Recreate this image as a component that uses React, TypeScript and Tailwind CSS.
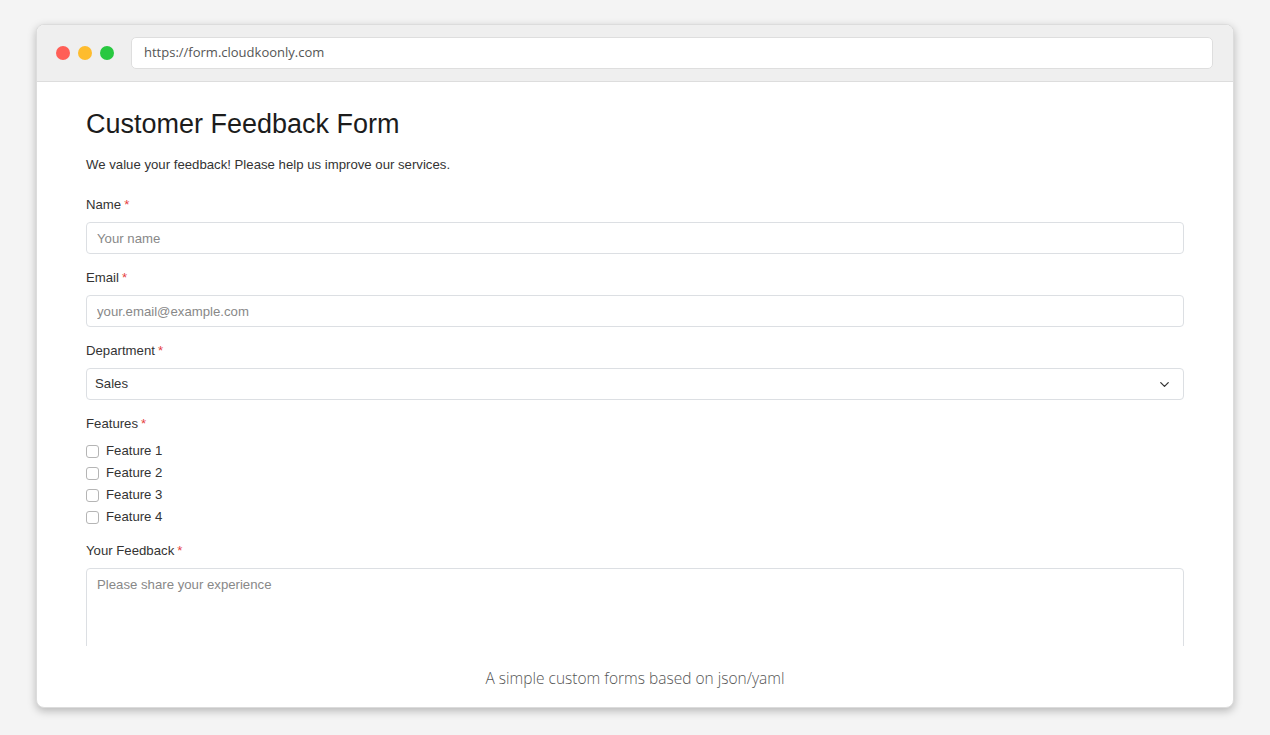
import React from 'react';
import { ChevronDown } from 'lucide-react';

const Label: React.FC<{ text: string }> = ({ text }) => (
  <div className="h-5 leading-5 text-[13.2px] text-[#333]">
    {text}
    <span className="ml-[3px] text-[#e53e3e]">*</span>
  </div>
);

const features = ['Feature 1', 'Feature 2', 'Feature 3', 'Feature 4'];

export default function App() {
  return (
    <div className="min-h-screen w-full bg-[#f4f4f4] pt-6 px-9" style={{ fontFamily: '"Liberation Sans", Arial, sans-serif' }}>
      <div className="h-[684px] w-[1198px] flex flex-col overflow-hidden rounded-lg bg-white border border-[#dcdcdc] shadow-[0_3px_8px_rgba(0,0,0,0.25)]">
        {/* title bar */}
        <div className="h-[57px] shrink-0 flex items-center bg-[#efefef] border-b border-[#dddddd] pl-[19px] pr-5">
          <div className="flex items-center gap-2">
            <span className="block w-[14px] h-[14px] rounded-full bg-[#ff5f57]" />
            <span className="block w-[14px] h-[14px] rounded-full bg-[#febc2e]" />
            <span className="block w-[14px] h-[14px] rounded-full bg-[#28c840]" />
          </div>
          <div
            className="ml-[17px] flex-1 h-[32px] flex items-center rounded-[5px] bg-white border border-[#dedede] px-3 text-[13px] text-[#555]"
            style={{ fontFamily: '"Open Sans", sans-serif' }}
          >
            https://form.cloudkoonly.com
          </div>
        </div>

        {/* scrolling form area */}
        <div className="h-[564px] shrink-0 overflow-hidden px-[49px] pt-[27px]">
          <h1 className="text-[27px] leading-[30px] text-[#1c1c1c]">Customer Feedback Form</h1>
          <p className="mt-[16px] text-[13.2px] leading-5 text-[#333]">We value your feedback! Please help us improve our services.</p>

          <div className="mt-5">
            <Label text="Name" />
            <input
              className="mt-[7px] mb-[14px] block w-full h-[32px] rounded border border-[#dcdfe3] px-[10px] text-[13.2px] outline-none placeholder:text-[#888]"
              placeholder="Your name"
            />
            <Label text="Email" />
            <input
              className="mt-[7px] mb-[14px] block w-full h-[32px] rounded border border-[#dcdfe3] px-[10px] text-[13.2px] outline-none placeholder:text-[#888]"
              placeholder="your.email@example.com"
            />
            <Label text="Department" />
            <div className="mt-[7px] mb-[14px] w-full h-[32px] rounded border border-[#dcdfe3] flex items-center justify-between pl-2 pr-[11px] text-[13.2px] text-[#333]">
              <span>Sales</span>
              <ChevronDown size={15} strokeWidth={2} className="text-[#333]" />
            </div>
            <Label text="Features" />
            <div className="mt-[6px] mb-[13px]">
              {features.map(f => (
                <div key={f} className="h-[22px] flex items-center">
                  <span className="block w-[13px] h-[13px] rounded-[3px] border border-[#b5b5b5] bg-white" />
                  <span className="ml-[7px] text-[13.2px] text-[#333]">{f}</span>
                </div>
              ))}
            </div>
            <Label text="Your Feedback" />
            <textarea
              className="mt-[7px] block w-full h-[120px] resize-none rounded border border-[#dcdfe3] px-[10px] py-[6px] text-[13.2px] outline-none placeholder:text-[#888]"
              placeholder="Please share your experience"
            />
          </div>
        </div>

        {/* footer */}
        <div className="flex-1 flex items-center justify-center text-[15.5px] font-light text-[#555] pt-[5px]" style={{ fontFamily: '"Open Sans", sans-serif' }}>
          A simple custom forms based on json/yaml
        </div>
      </div>
    </div>
  );
}
